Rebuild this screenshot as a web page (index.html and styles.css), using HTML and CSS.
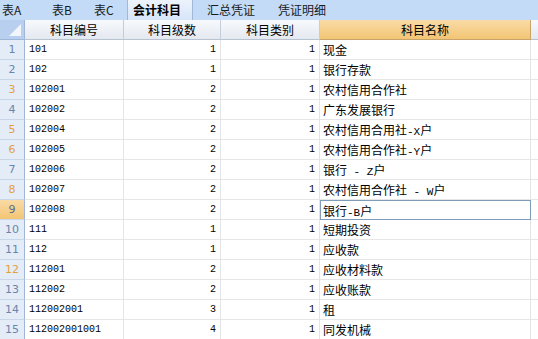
FILE: index.html
```html
<!DOCTYPE html>
<html lang="zh">
<head>
<meta charset="utf-8">
<link rel="stylesheet" href="styles.css">
</head>
<body>
<div class="tabs">
  <div class="tab t1">表A</div>
  <div class="tab t2">表B</div>
  <div class="tab t3">表C</div>
  <div class="tab active">会计科目</div>
  <div class="tab t5">汇总凭证</div>
  <div class="tab t6">凭证明细</div>
</div>
<div class="grid">
  <div class="corner"><span class="tri"></span></div>
  <div class="ch">科目编号</div>
  <div class="ch">科目级数</div>
  <div class="ch">科目类别</div>
  <div class="ch sel">科目名称</div>
  <div class="ch">&nbsp;</div>

  <div class="rh">1</div><div class="c code">101</div><div class="c num">1</div><div class="c num">1</div><div class="c name">现金</div><div class="c"></div>
  <div class="rh">2</div><div class="c code">102</div><div class="c num">1</div><div class="c num">1</div><div class="c name">银行存款</div><div class="c"></div>
  <div class="rh o">3</div><div class="c code">102001</div><div class="c num">2</div><div class="c num">1</div><div class="c name">农村信用合作社</div><div class="c"></div>
  <div class="rh">4</div><div class="c code">102002</div><div class="c num">2</div><div class="c num">1</div><div class="c name">广东发展银行</div><div class="c"></div>
  <div class="rh o">5</div><div class="c code">102004</div><div class="c num">2</div><div class="c num">1</div><div class="c name">农村信用合用社<span class="lat">-X</span>户</div><div class="c"></div>
  <div class="rh o">6</div><div class="c code">102005</div><div class="c num">2</div><div class="c num">1</div><div class="c name">农村信用合作社<span class="lat">-Y</span>户</div><div class="c"></div>
  <div class="rh">7</div><div class="c code">102006</div><div class="c num">2</div><div class="c num">1</div><div class="c name">银行<span class="lat"> - Z</span>户</div><div class="c"></div>
  <div class="rh o">8</div><div class="c code">102007</div><div class="c num">2</div><div class="c num">1</div><div class="c name">农村信用合作社<span class="lat"> - W</span>户</div><div class="c"></div>
  <div class="rh cur">9</div><div class="c code">102008</div><div class="c num">2</div><div class="c num">1</div><div class="c name edit">银行<span class="lat">-B</span>户</div><div class="c"></div>
  <div class="rh">10</div><div class="c code">111</div><div class="c num">1</div><div class="c num">1</div><div class="c name">短期投资</div><div class="c"></div>
  <div class="rh">11</div><div class="c code">112</div><div class="c num">1</div><div class="c num">1</div><div class="c name">应收款</div><div class="c"></div>
  <div class="rh o">12</div><div class="c code">112001</div><div class="c num">2</div><div class="c num">1</div><div class="c name">应收材料款</div><div class="c"></div>
  <div class="rh">13</div><div class="c code">112002</div><div class="c num">2</div><div class="c num">1</div><div class="c name">应收账款</div><div class="c"></div>
  <div class="rh">14</div><div class="c code">112002001</div><div class="c num">3</div><div class="c num">1</div><div class="c name">租</div><div class="c"></div>
  <div class="rh">15</div><div class="c code">112002001001</div><div class="c num">4</div><div class="c num">1</div><div class="c name">同发机械</div><div class="c"></div>
</div>
</body>
</html>
```
FILE: styles.css
```css
html, body {
  margin: 0;
  padding: 0;
  background: #ffffff;
  overflow: hidden;
}
body {
  width: 538px;
  height: 339px;
  font-family: "Noto Sans CJK SC", "Liberation Sans", sans-serif;
  font-size: 12px;
  color: #000;
}
.tabs {
  display: flex;
  height: 20px;
  background: #c4dbf7;
  align-items: stretch;
  padding-left: 2px;
}
.tab {
  box-sizing: border-box;
  line-height: 20px;
  color: #1a1a1a;
  flex: none;
}
.t1 { width: 50px; }
.t2 { width: 42px; }
.t3 { width: 33px; }
.tab.active {
  width: 66px;
  font-weight: bold;
  color: #000;
  background: linear-gradient(#edf3fb, #d6e5f8);
  border-left: 1px solid #9fb8d8;
  border-right: 1px solid #9fb8d8;
  padding-left: 5px;
}
.t5 { width: 71px; margin-left: 14px; }
.t6 { width: 80px; }
.grid {
  display: grid;
  grid-template-columns: 25px 99px 97px 99px 211px 1fr;
  grid-auto-rows: 20px;
}
.grid > div {
  box-sizing: border-box;
  line-height: 19px;
  white-space: nowrap;
  overflow: hidden;
}
.corner {
  background: #b8cff0;
  border-right: 1px solid #9fb6d6;
  border-bottom: 1px solid #9fb6d6;
  position: relative;
}
.tri {
  position: absolute;
  right: 3px;
  bottom: 3px;
  width: 0;
  height: 0;
  border-left: 12px solid transparent;
  border-bottom: 12px solid #f2f6fc;
}
.ch {
  text-align: center;
  background: linear-gradient(#f7f9fc, #e4e9f0);
  border-right: 1px solid #c5cdd9;
  border-bottom: 1px solid #b8c2d0;
  color: #000;
}
.ch.sel {
  background: linear-gradient(#f9dba6, #f3c574);
  border-right: 1px solid #c9a46a;
  border-bottom: 1px solid #c9a46a;
}
.rh {
  background: #e4ecf7;
  border-right: 1px solid #9fb6d6;
  border-bottom: 1px solid #c9d6e8;
  color: #6b84aa;
  text-align: center;
  font-family: "DejaVu Sans", sans-serif;
  font-size: 11px;
}
.rh.o { color: #e2a040; }
.rh.cur {
  background: linear-gradient(#f9dba6, #f3c574);
  color: #5a6d8a;
}
.c {
  border-right: 1px solid #e2e4e8;
  border-bottom: 1px solid #e6e6e6;
  padding: 0 4px;
}
.code {
  font-family: "Liberation Mono", monospace;
  font-size: 10px;
}
.num {
  text-align: right;
  font-family: "Liberation Mono", monospace;
  font-size: 10px;
}
.name {
  padding-left: 3px;
}
.lat {
  font-family: "Liberation Mono", monospace;
  font-size: 11px;
}
.edit {
  border: 1px solid #7f9db9;
  line-height: 18px;
  padding-left: 2px;
}
```
